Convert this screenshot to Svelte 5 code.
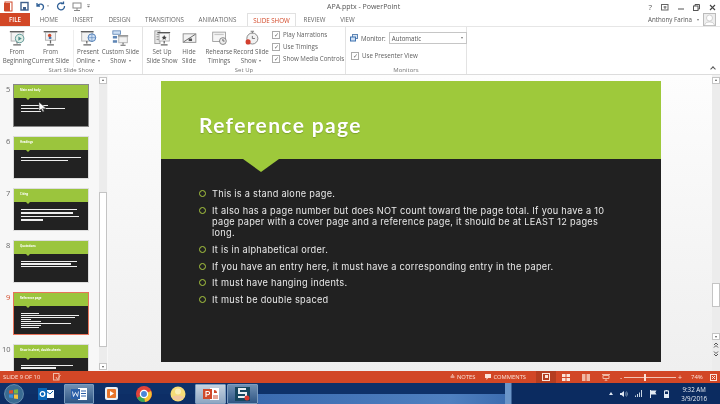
<script>
  const tabs = [
    { t: 'HOME', w: 38 }, { t: 'INSERT', w: 30 }, { t: 'DESIGN', w: 43 }, { t: 'TRANSITIONS', w: 47 },
    { t: 'ANIMATIONS', w: 59 }, { t: 'SLIDE SHOW', w: 49, active: true }, { t: 'REVIEW', w: 37 }, { t: 'VIEW', w: 29 }
  ];
  const thumbs = [
    { n: 5, title: 'Main and body', lines: [27, 44, 20], gap: 1.7, hover: true },
    { n: 6, title: 'Headings', lines: [60, 47], gap: 1.7 },
    { n: 7, title: 'Citing', lines: [56, 52, 58, 22], gap: 2.2 },
    { n: 8, title: 'Quotations', lines: [56, 50, 56], gap: 1.2 },
    { n: 9, title: 'Reference page', lines: [18, 58, 54, 10, 20, 50, 20, 18], gap: .7, active: true },
    { n: 10, title: 'Show in-sheet, double-sheets', lines: [52, 35], gap: 1.2, cut: true }
  ];
  const bullets = [
    ['This is a stand alone page.'],
    ['It also has a page number but does NOT count toward the page total. If you have a 10', 'page paper with a cover page and a reference page, it should be at LEAST 12 pages', 'long.'],
    ['It is in alphabetical order.'],
    ['If you have an entry here, it must have a corresponding entry in the paper.'],
    ['It must have hanging indents.'],
    ['It must be double spaced']
  ];
</script>

<div class="win">
  <header class="title">
    <div class="qat">
      <svg width="96" height="13" viewBox="0 0 96 13">
        <rect x="5" y="2" width="7" height="9" fill="#fff" stroke="#d0492a"/><rect x="4" y="3" width="6" height="8" fill="#d0492a"/>
        <rect x="21" y="2.500" width="7" height="7.500" fill="none" stroke="#3f5f8c" stroke-width="1.400"/><rect x="23" y="7" width="3" height="3" fill="#3f5f8c"/>
        <path d="M37 3v3h3M37.500 5.500c2-2.500 6-1.500 6 1.500 0 1.500-1 2.500-2 3" fill="none" stroke="#2f5f96" stroke-width="1.300"/>
        <path d="M47 5.500h2l-1 1.200z" fill="#666"/>
        <path d="M63 3.500a3.500 3.500 0 1 0 1.500 2.500M61 3.500h2.500v-2" fill="none" stroke="#2f5f96" stroke-width="1.300"/>
        <rect x="73" y="3" width="8" height="5" fill="none" stroke="#888"/><path d="M77 8v2M74 10.500h6" stroke="#888"/>
        <path d="M87 4.500h3M87.500 6h2l-1 1.300z" fill="#777" stroke="#777" stroke-width=".5"/>
      </svg>
    </div>
    <div class="doc">APA.pptx - PowerPoint</div>
    <div class="winctl">
      <span class="help">?</span>
      <svg width="8" height="7" viewBox="0 0 8 7"><rect x=".5" y=".5" width="6.500" height="5.500" fill="none" stroke="#666"/><path d="M2.500 3h3M4 2v3" stroke="#666"/></svg>
      <svg width="6" height="7" viewBox="0 0 6 7"><path d="M0 5h6" stroke="#555"/></svg>
      <svg width="7" height="7" viewBox="0 0 7 7"><rect x=".5" y="2" width="4.500" height="4.500" fill="none" stroke="#555"/><path d="M2 2V.5h4.500V5H5" fill="none" stroke="#555"/></svg>
      <svg width="7" height="7" viewBox="0 0 7 7"><path d="M1 1l5 5M6 1l-5 5" stroke="#444" stroke-width="1.100"/></svg>
    </div>
  </header>

  <nav class="tabs">
    <div class="file">FILE</div>
    {#each tabs as t}
      <div class="tab" class:active={t.active} style="width:{t.w}px">{t.t}</div>
    {/each}
    <div class="user">Anthony Farina <i class="caret"></i>
      <svg width="13" height="13" viewBox="0 0 13 13"><rect x=".5" y=".5" width="12" height="12" fill="#eee" stroke="#bbb"/><circle cx="6.500" cy="5" r="3" fill="#fff" stroke="#aaa" stroke-width=".5"/><path d="M1.500 12.500c.5-3 3-3.500 5-3.500s4.500.5 5 3.500z" fill="#fff" stroke="#aaa" stroke-width=".5"/></svg>
    </div>
  </nav>

  <section class="ribbon">
    <div class="group g1">
      <div class="cmds">
        <div class="cmd w31">
          <svg class="ic" viewBox="0 0 20 20"><path d="M1 2h17" stroke="#555" stroke-width="1.500"/><rect x="2.500" y="3" width="14" height="10" fill="#f2f2f2" stroke="#aaa"/><path d="M9.500 13v3M5 17.500h9" stroke="#666" stroke-width="1.500"/><circle cx="12.500" cy="10" r="5" fill="#dfeee6" stroke="#4c8c8c"/><path d="M11 7.500l4 2.500-4 2.500z" fill="#4c8c8c"/></svg>
          <span>From<br/>Beginning</span>
        </div>
        <div class="cmd w36">
          <svg class="ic" viewBox="0 0 20 20"><path d="M2 2h16" stroke="#555" stroke-width="1.500"/><rect x="4" y="3" width="12" height="9" fill="#f2f2f2" stroke="#aaa"/><path d="M10 12v4M6 17.500h8" stroke="#666" stroke-width="1.500"/><circle cx="9" cy="6.500" r="2" fill="#d0492a"/><rect x="8" y="8" width="3" height="2.500" fill="#3f73b0"/></svg>
          <span>From<br/>Current Slide</span>
        </div>
      </div>
      <div class="cmds narrow">
        <div class="cmd w23">
          <svg class="ic" viewBox="0 0 20 20"><path d="M1 2h15" stroke="#555" stroke-width="1.500"/><rect x="2" y="3" width="13" height="10" fill="#f2f2f2" stroke="#aaa"/><path d="M8 13v3M4 17.500h9" stroke="#666" stroke-width="1.500"/><circle cx="14" cy="9" r="4.500" fill="#cfe0f4" stroke="#3f73b0"/><path d="M9.500 9h9M14 4.500v9" stroke="#3f73b0" stroke-width=".6"/></svg>
          <span>Present<br/>Online <i class="caret"></i></span>
        </div>
        <div class="cmd w36">
          <svg class="ic" viewBox="0 0 20 20"><rect x="1" y="1" width="9" height="4" fill="#cfe0f4" stroke="#5f86b5"/><rect x="1" y="7" width="5" height="3" fill="#5f86b5"/><rect x="1" y="12" width="5" height="3" fill="#5f86b5"/><path d="M7 7h12" stroke="#555" stroke-width="1.300"/><rect x="8" y="8" width="10" height="7" fill="#f2f2f2" stroke="#aaa"/><path d="M13 15v2M10 18h6" stroke="#666" stroke-width="1.300"/></svg>
          <span>Custom Slide<br/>Show <i class="caret"></i></span>
        </div>
      </div>
      <div class="glabel">Start Slide Show</div>
    </div>

    <div class="group g2">
      <div class="cmds">
        <div class="cmd w34">
          <svg class="ic" viewBox="0 0 20 20"><rect x="1" y="1" width="6" height="15" fill="#e9e9e9" stroke="#999"/><path d="M3 5h3M3 8h3M3 11h3" stroke="#777"/><path d="M4 3h15" stroke="#555" stroke-width="1.300"/><rect x="6" y="4" width="12" height="9" fill="#f6f6f6" stroke="#aaa"/><path d="M12 13v3M8 17.500h8" stroke="#666" stroke-width="1.500"/><path d="M12 6l1 2 2 .2-1.500 1.300.5 2-2-1-2 1 .5-2L9 8.200l2-.2z" fill="#444"/></svg>
          <span>Set Up<br/>Slide Show</span>
        </div>
        <div class="cmd w20">
          <svg class="ic" viewBox="0 0 20 20"><rect x="2.500" y="4.500" width="15" height="10" fill="#f2f2f2" stroke="#888"/><path d="M3 14L17 5" stroke="#555"/><path d="M9 10h4v3H9z" fill="#555"/></svg>
          <span>Hide<br/>Slide</span>
        </div>
        <div class="cmd w28">
          <svg class="ic" viewBox="0 0 20 20"><rect x="2" y="2.500" width="15" height="11" fill="#f6f6f6" stroke="#999"/><rect x="4" y="4.500" width="11" height="1.500" fill="#c7c7c7"/><circle cx="14" cy="13" r="4" fill="#eee" stroke="#777"/><path d="M14 10.500V13h2" fill="none" stroke="#555"/></svg>
          <span>Rehearse<br/>Timings</span>
        </div>
        <div class="cmd w36">
          <svg class="ic" viewBox="0 0 20 20"><circle cx="11" cy="10" r="6.500" fill="#f1f1f1" stroke="#777"/><path d="M11 2v2M9 1.500h4M11 7v3h3" fill="none" stroke="#666"/><circle cx="6" cy="14" r="3" fill="#d23f2e"/></svg>
          <span>Record Slide<br/>Show <i class="caret"></i></span>
        </div>
      </div>
      <div class="checks">
        <label class="chk"><b>✓</b>Play Narrations</label>
        <label class="chk"><b>✓</b>Use Timings</label>
        <label class="chk"><b>✓</b>Show Media Controls</label>
      </div>
      <div class="glabel">Set Up</div>
    </div>

    <div class="group g3">
      <div class="mon">
        <div class="row1">
          <svg width="8" height="8" viewBox="0 0 8 8"><rect x="2.500" y=".5" width="5" height="4" fill="#dce7f3" stroke="#5f86b5"/><rect x=".5" y="3" width="5" height="4" fill="#cfe0f4" stroke="#3f73b0"/></svg>
          <span>Monitor:</span>
          <div class="select">Automatic<i class="caret"></i></div>
        </div>
        <label class="chk pres"><b>✓</b>Use Presenter View</label>
      </div>
      <div class="glabel">Monitors</div>
    </div>
    <div class="rest"><span class="collapse"></span></div>
  </section>

  <main class="work">
    <aside class="thumbs">
      <div class="list">
        {#each thumbs as t}
          <div class="item" class:cut={t.cut}>
            <span class="num" class:red={t.active}>{t.n}</span>
            <div class="mini" class:sel={t.active} class:hov={t.hover}>
              <div class="mhead"><span>{t.title}</span><i></i></div>
              <div class="mbody" style="gap:{t.gap}px">
                {#each t.lines as l}
                  <div class="mline" style="width:{l}px"></div>
                {/each}
              </div>
            </div>
          </div>
        {/each}
      </div>
      <div class="sbar">
        <div class="sbtn up"></div>
        <div class="strack"><div class="sthumb"></div></div>
        <div class="sbtn down"></div>
      </div>
      <svg class="cursor" width="9" height="12" viewBox="0 0 9 12"><path d="M1 1v9l2.300-2 1.500 3 1.400-.7-1.500-3H8z" fill="#fff" stroke="#333" stroke-width=".6"/></svg>
    </aside>

    <div class="stage">
      <article class="slide">
        <div class="shead">
          <h1>Reference page</h1>
          <i class="notch"></i>
        </div>
        <ul class="sbody">
          {#each bullets as b}
            <li>{#each b as l}<span class="ln">{l}</span>{/each}</li>
          {/each}
        </ul>
      </article>
    </div>

    <div class="sbar right">
      <div class="sbtn up"></div>
      <div class="strack"><div class="rthumb"></div></div>
      <div class="sbtn down"></div>
      <div class="pn">
        <svg width="6" height="6" viewBox="0 0 6 6"><path d="M1 3l2-2 2 2M1 5.500l2-2 2 2" fill="none" stroke="#555"/></svg>
        <svg width="6" height="6" viewBox="0 0 6 6"><path d="M1 .5l2 2 2-2M1 3l2 2 2-2" fill="none" stroke="#555"/></svg>
      </div>
    </div>
  </main>

  <footer class="status">
    <span class="st1">SLIDE 9 OF 10</span>
    <svg class="st2" width="8" height="8" viewBox="0 0 8 8"><rect x=".5" y=".5" width="5.500" height="6.500" fill="none" stroke="#f0b9a5"/><path d="M3 4l1.500 2.500L7.500 2" fill="none" stroke="#f0b9a5"/></svg>
    <div class="stright">
      <span class="sitem">≜ NOTES</span>
      <span class="sitem"><svg width="6" height="6" viewBox="0 0 6 6"><path d="M0 0h6v4H3L1.500 6V4H0z" fill="#fbe3d9"/></svg> COMMENTS</span>
      <div class="views">
        <span class="vw on"><svg width="8" height="8" viewBox="0 0 8 8"><rect x=".5" y=".5" width="7" height="7" fill="none" stroke="#fbe3d9"/><rect x="3" y="2" width="3" height="3" fill="#fbe3d9"/></svg></span>
        <span class="vw"><svg width="8" height="7" viewBox="0 0 8 7"><path d="M0 0h3.500v3H0zM4.500 0H8v3H4.500zM0 4h3.500v3H0zM4.500 4H8v3H4.500z" fill="#fbe3d9"/></svg></span>
        <span class="vw"><svg width="8" height="7" viewBox="0 0 8 7"><path d="M0 0h3.500v7H0zM4.500 0H8v7H4.500z" fill="#f0b9a5"/></svg></span>
        <span class="vw"><svg width="8" height="7" viewBox="0 0 8 7"><path d="M0 .5h8M1 1.500h6v3H1zM4 4.500V7M2.500 7h3" fill="none" stroke="#f0b9a5"/></svg></span>
      </div>
      <div class="zoom"><span>-</span><div class="ztrack"><i class="zk"></i></div><span>+</span></div>
      <span class="pct">74%</span>
      <svg class="fit" width="7" height="7" viewBox="0 0 7 7"><rect x=".5" y=".5" width="6" height="6" fill="none" stroke="#fbe3d9"/><path d="M2 2l3 3M5 2L2 5" stroke="#fbe3d9"/></svg>
    </div>
  </footer>

  <div class="taskbar">
    <div class="start"><svg width="20" height="20" viewBox="0 0 20 20"><circle cx="10" cy="10" r="9.500" fill="#3a6b92" stroke="#8fb3cc" stroke-width=".6"/><path d="M5 6.500l4-.6v3.600H5z" fill="#d9502e"/><path d="M10 5.800l4-.6v4.300h-4z" fill="#7cb342"/><path d="M5 10.500h4V14l-4-.6z" fill="#3f8fd8"/><path d="M10 10.500h4V15l-4-.6z" fill="#f3c33c"/></svg></div>
    <div class="tb t-outlook"><svg width="16" height="14" viewBox="0 0 16 14"><rect x="7" y="3" width="9" height="8" fill="#fff"/><path d="M8 4l4 3 3-3" fill="none" stroke="#0a5fa8"/><rect x="0" y="1" width="9" height="12" fill="#0a67b8"/><circle cx="4.500" cy="7" r="2.300" fill="none" stroke="#fff" stroke-width="1.300"/></svg></div>
    <div class="tb open t-word"><svg width="16" height="14" viewBox="0 0 16 14"><rect x="7" y="1" width="9" height="12" fill="#fff"/><path d="M10 4h5M10 6.500h5M10 9h5" stroke="#2b5fa8"/><rect x="0" y="2" width="9" height="10" fill="#2b5fa8"/><path d="M1.500 4.500l1 5 2-4 2 4 1-5" fill="none" stroke="#fff" stroke-width=".8"/></svg></div>
    <div class="tb t-media"><svg width="15" height="15" viewBox="0 0 15 15"><rect x="1" y="1" width="13" height="13" rx="2" fill="#e9f1f7"/><rect x="3" y="3" width="9" height="9" rx="1" fill="#e8762b"/><path d="M6 5l4 2.500L6 10z" fill="#fff"/></svg></div>
    <div class="tb t-chrome"><svg width="16" height="16" viewBox="0 0 16 16"><circle cx="8" cy="8" r="8" fill="#e0433a"/><path d="M8 8L1 12a8 8 0 0 0 8 4z" fill="#3aa655"/><path d="M8 8l7-3a8 8 0 0 1-6 11z" fill="#f5c431"/><circle cx="8" cy="8" r="3.600" fill="#4a86d8" stroke="#fff" stroke-width="1.300"/></svg></div>
    <div class="tb t-sun"><svg width="16" height="16" viewBox="0 0 16 16"><circle cx="8" cy="8" r="7.500" fill="#f6dc78"/><circle cx="8" cy="5.500" r="3" fill="#fbeeb8"/><path d="M2 11c3-2 9-2 12 0a7.500 7.500 0 0 1-12 0z" fill="#f3c7a2"/></svg></div>
    <div class="tb open lite t-ppt"><svg width="16" height="14" viewBox="0 0 16 14"><rect x="7" y="1" width="9" height="12" fill="#fff"/><path d="M11 3a3 3 0 0 1 3 3h-3z" fill="#d0492a"/><path d="M10 9h5M10 11h5" stroke="#d0492a"/><rect x="0" y="2" width="9" height="10" fill="#d0492a"/><path d="M3 10V4.500h2a1.500 1.500 0 0 1 0 3.200H3" fill="none" stroke="#fff" stroke-width="1.100"/></svg></div>
    <div class="tb open t-snag"><svg width="17" height="16" viewBox="0 0 17 16"><rect x="1" y="1" width="15" height="14" fill="#17465f"/><path d="M12 3H5v4h7v4H4" fill="none" stroke="#e8eef2" stroke-width="2"/><circle cx="13" cy="12" r="2.500" fill="#d8362e"/></svg></div>
    <div class="tray">
      <svg width="4" height="3" viewBox="0 0 4 3"><path d="M0 3l2-3 2 3z" fill="#dfe8f2"/></svg>
      <svg width="8" height="8" viewBox="0 0 8 8"><path d="M0 3h1.500L4 1v6L1.500 5H0z" fill="#dfe8f2"/><path d="M5.500 2.500a2.500 2.500 0 0 1 0 3M6.500 1.500a4 4 0 0 1 0 5" fill="none" stroke="#a9bccf" stroke-width=".7"/></svg>
      <svg width="8" height="7" viewBox="0 0 8 7"><path d="M0 7h1V5.500H0zM2 7h1V4H2zM4 7h1V2.500H4zM6 7h1V0H6z" fill="#c9d6e3"/></svg>
      <svg width="7" height="8" viewBox="0 0 7 8"><path d="M.5 0v8" stroke="#e3ebf3"/><path d="M1 .5h5.500L5.300 2.500l1.200 2H1z" fill="#e3ebf3"/></svg>
      <svg width="5" height="8" viewBox="0 0 5 8"><rect x=".5" y="1" width="4" height="6.500" fill="none" stroke="#e3ebf3"/><rect x="1" y="4" width="3" height="3" fill="#e3ebf3"/><rect x="1.500" y="0" width="2" height="1" fill="#e3ebf3"/></svg>
      <div class="clock">9:32 AM<br/>3/9/2016</div>
    </div>
  </div>
</div>

<style>
  :global(body) { margin: 0; overflow: hidden; background: #fff; }
  .win { width: 720px; height: 404px; display: flex; flex-direction: column; font-family: "Open Sans", "Liberation Sans", sans-serif; color: #555; overflow: hidden; background: #f1f1f1; filter: blur(.3px); }
  .title { height: 13px; flex: none; display: flex; align-items: center; background: #fff; position: relative; }
  .qat { display: flex; }
  .doc { position: absolute; left: 327px; top: 1px; font-size: 7px; line-height: 11px; color: #555; }
  .winctl { margin-left: auto; display: flex; align-items: center; gap: 9px; padding-right: 4px; margin-top: 1px; }
  .help { font-size: 8px; line-height: 8px; color: #555; }

  .tabs { height: 13px; flex: none; display: flex; align-items: stretch; background: #fff; }
  .file { width: 30px; background: #d24726; color: #fff; font-size: 6.200px; font-weight: 600; display: flex; align-items: center; justify-content: center; }
  .tab { font-size: 6.200px; display: flex; align-items: center; justify-content: center; color: #666; white-space: nowrap; }
  .tab.active { color: #d24726; background: #fff; border: 1px solid #e1e1e1; border-bottom: 0; box-sizing: border-box; }
  .user { margin-left: auto; display: flex; align-items: center; gap: 4px; font-size: 6.200px; color: #555; padding-right: 4px; }
  .caret { display: inline-block; width: 0; height: 0; border: 1.500px solid transparent; border-top: 2px solid #777; border-bottom: 0; vertical-align: middle; margin-left: 1px; }

  .ribbon { flex: none; display: flex; background: #fff; border-top: 1px solid #e6e6e6; border-bottom: 1px solid #dcdcdc; box-sizing: border-box; height: 49px; }
  .group { position: relative; display: flex; border-right: 1px solid #e3e3e3; padding-top: 3px; box-sizing: border-box; }
  .g1 { width: 143px; padding-left: 1.500px; }
  .g2 { width: 203px; padding-left: 2px; }
  .g3 { width: 121px; }
  .rest { flex: 1; position: relative; }
  .collapse { position: absolute; right: 5px; bottom: 3px; width: 3px; height: 3px; border-left: 1px solid #555; border-top: 1px solid #555; transform: rotate(45deg); }
  .cmds { display: flex; }
  .narrow { margin-left: 4px; padding-left: 3px; border-left: 1px solid #eee; height: 37px; gap: 3px; }
  .cmd { display: flex; flex-direction: column; align-items: center; font-size: 6.200px; line-height: 8.500px; text-align: center; white-space: nowrap; color: #5f5f5f; }
  .ic { width: 17px; height: 17px; margin-bottom: 1px; flex: none; }
  .w31 { width: 31px; } .w36 { width: 36px; } .w23 { width: 23px; } .w34 { width: 34px; } .w20 { width: 20px; }
  .w28 { width: 28px; margin-left: 6px; }
  .glabel { position: absolute; left: 0; right: 0; bottom: 0; text-align: center; font-size: 6px; line-height: 8px; color: #777; }
  .checks { display: flex; flex-direction: column; gap: 3px; margin-left: 3px; }
  .chk { display: flex; align-items: center; gap: 3px; font-size: 6.200px; line-height: 9px; white-space: nowrap; color: #5f5f5f; }
  .chk b { width: 6px; height: 6px; border: .5px solid #aaa; font-size: 6px; line-height: 6px; text-align: center; font-weight: 400; color: #666; display: block; flex: none; }
  .mon { padding: 2px 0 0 4px; display: flex; flex-direction: column; gap: 7px; }
  .row1 { display: flex; align-items: center; gap: 3px; font-size: 6.200px; color: #555; }
  .select { width: 78px; height: 12px; border: 1px solid #c6c6c6; display: flex; align-items: center; justify-content: space-between; padding: 0 3px 0 2px; box-sizing: border-box; }
  .pres { margin-left: 1px; }

  .work { flex: 1; min-height: 0; display: flex; position: relative; }
  .thumbs { width: 108px; flex: none; display: flex; position: relative; background: #f7f7f7; padding-top: 3px; box-sizing: border-box; }
  .list { width: 99px; overflow: hidden; margin-top: 5px; }
  .item { display: flex; height: 52px; padding: 2px 0 0 6px; box-sizing: border-box; }
  .item.cut { height: 28px; overflow: hidden; }
  .num { width: 8px; font-size: 7.500px; line-height: 9px; color: #666; }
  .num.red { color: #d24726; }
  .item:last-child .num { margin-left: -4px; width: 12px; }
  .mini { width: 74px; height: 41px; flex: none; display: flex; flex-direction: column; outline: 1px solid #ddd; }
  .mini.sel { outline: 1px solid #e8735a; box-shadow: 0 0 0 1px #f0a28f; }
  .mini.hov { outline: 1px solid #888; }
  .mhead { height: 13px; background: #9bc53d; position: relative; padding: 3px 0 0 6px; font-size: 2.800px; line-height: 4px; color: #fff; font-weight: 700; white-space: nowrap; flex: none; box-sizing: border-box; }
  .mhead i { position: absolute; left: 12px; bottom: -2px; width: 0; height: 0; border: 2px solid transparent; border-top: 2px solid #9bc53d; border-bottom: 0; z-index: 1; }
  .mbody { flex: 1; background: #222; padding: 7px 0 0 7px; display: flex; flex-direction: column; }
  .mline { height: 1.300px; background: #eee; flex: none; }
  .sbar { width: 8px; flex: none; display: flex; flex-direction: column; background: #ececec; box-sizing: border-box; }
  .thumbs .sbar { position: absolute; left: 99px; top: 2px; bottom: 1px; }
  .sbar.right { margin-top: 2px; }
  .sbtn { height: 7px; flex: none; background: #fff; border: 1px solid #c4c4c4; box-sizing: border-box; position: relative; }
  .sbtn::after { content: ""; position: absolute; left: 1.500px; width: 0; height: 0; border: 1.500px solid transparent; }
  .up::after { top: 1px; border-bottom: 2px solid #555; border-top: 0; }
  .down::after { top: 2px; border-top: 2px solid #555; border-bottom: 0; }
  .strack { flex: 1; position: relative; }
  .sthumb { position: absolute; left: 0; right: 0; top: 108px; height: 155px; background: #fff; border: 1px solid #c4c4c4; box-sizing: border-box; }
  .rthumb { position: absolute; left: 0; right: 0; top: 199px; height: 24px; background: #fff; border: 1px solid #c4c4c4; box-sizing: border-box; }
  .pn { height: 31px; flex: none; display: flex; flex-direction: column; align-items: center; gap: 3px; padding-top: 2px; box-sizing: border-box; }
  .cursor { position: absolute; left: 38px; top: 26px; }

  .stage { flex: 1; padding: 6px 0 0 53px; box-sizing: border-box; background: linear-gradient(#fdfdfd, #efefef); }
  .slide { width: 500px; height: 281px; background: #212121; display: flex; flex-direction: column; }
  .shead { height: 78px; flex: none; background: #9ec93b; position: relative; padding: 29px 0 0 38px; box-sizing: border-box; }
  h1 { margin: 0; font-family: "Lato", sans-serif; font-weight: 700; font-size: 21px; line-height: 30px; color: #fff; letter-spacing: 1.350px; text-shadow: 0 1px 1px rgba(0,0,0,.2); }
  .notch { position: absolute; left: 82px; bottom: -13px; width: 0; height: 0; border-left: 18px solid transparent; border-right: 18px solid transparent; border-top: 13px solid #9ec93b; }
  .sbody { list-style: none; margin: 0; padding: 29px 0 0 38px; display: flex; flex-direction: column; gap: 5.500px; }
  li { position: relative; padding-left: 13px; font-family: "Inter", "Open Sans", sans-serif; font-size: 9.200px; line-height: 11.200px; letter-spacing: .27px; color: #e9e9e9; }
  li::before { content: ""; position: absolute; left: 0; top: 2px; width: 7px; height: 7px; border: 1.300px solid #a9c83f; border-radius: 50%; box-sizing: border-box; }
  .ln { display: block; white-space: nowrap; }

  .status { height: 12px; flex: none; background: #d24726; color: #fbe3d9; display: flex; align-items: center; font-size: 5.800px; padding-left: 3px; box-sizing: border-box; }
  .st2 { margin-left: 13px; }
  .stright { margin-left: auto; display: flex; align-items: center; height: 100%; padding-right: 3px; }
  .sitem { display: flex; align-items: center; gap: 2px; white-space: nowrap; margin-right: 10px; }
  .views { display: flex; align-items: center; height: 100%; }
  .vw { width: 20px; display: flex; align-items: center; justify-content: center; height: 100%; }
  .vw.on { background: #b53d20; }
  .zoom { display: flex; align-items: center; gap: 2px; margin-left: 4px; width: 62px; font-size: 7px; }
  .ztrack { flex: 1; height: 1px; background: #f3c4b3; position: relative; }
  .zk { position: absolute; left: 20px; top: -3px; width: 2px; height: 7px; background: #fbe3d9; }
  .pct { margin-left: 9px; width: 12px; font-size: 6px; white-space: nowrap; }
  .fit { margin-left: 7px; }

  .taskbar { height: 21px; flex: none; display: flex; align-items: center; position: relative;
    background:
      linear-gradient(#0e3169, #0e3169) 0 0 / 505px 11px no-repeat,
      linear-gradient(90deg, #0d2e66 0 258px, #3b6bb0 258px, #4f80c0 450px, #3d6db0 505px, #6b95c8 505px 511px, #0b2b60 512px, #0b2b60 100%); }
  .start { width: 20px; margin-left: 4px; display: flex; }
  .tb { height: 20px; width: 30px; display: flex; align-items: center; justify-content: center; flex: none; box-sizing: border-box; }
  .tb.open { background: linear-gradient(#6f8fb3, #2f5684); border: 1px solid #7d9cbe; border-radius: 1px; }
  .tb.lite { background: linear-gradient(#c5d2e0, #8ea6c2); }
  .t-outlook { width: 24px; margin-left: 10px; }
  .t-word { margin-left: 6px; }
  .t-media { margin-left: 2px; }
  .t-chrome { margin-left: 3px; }
  .t-sun { margin-left: 4px; }
  .t-ppt { width: 31px; margin-left: 2px; }
  .t-snag { width: 31px; margin-left: 1px; }
  .tray { margin-left: auto; display: flex; align-items: center; gap: 7px; padding-right: 13px; }
  .clock { font-size: 6.200px; line-height: 9px; color: #e9eef4; margin-left: 5px; text-align: center; white-space: nowrap; }
</style>
